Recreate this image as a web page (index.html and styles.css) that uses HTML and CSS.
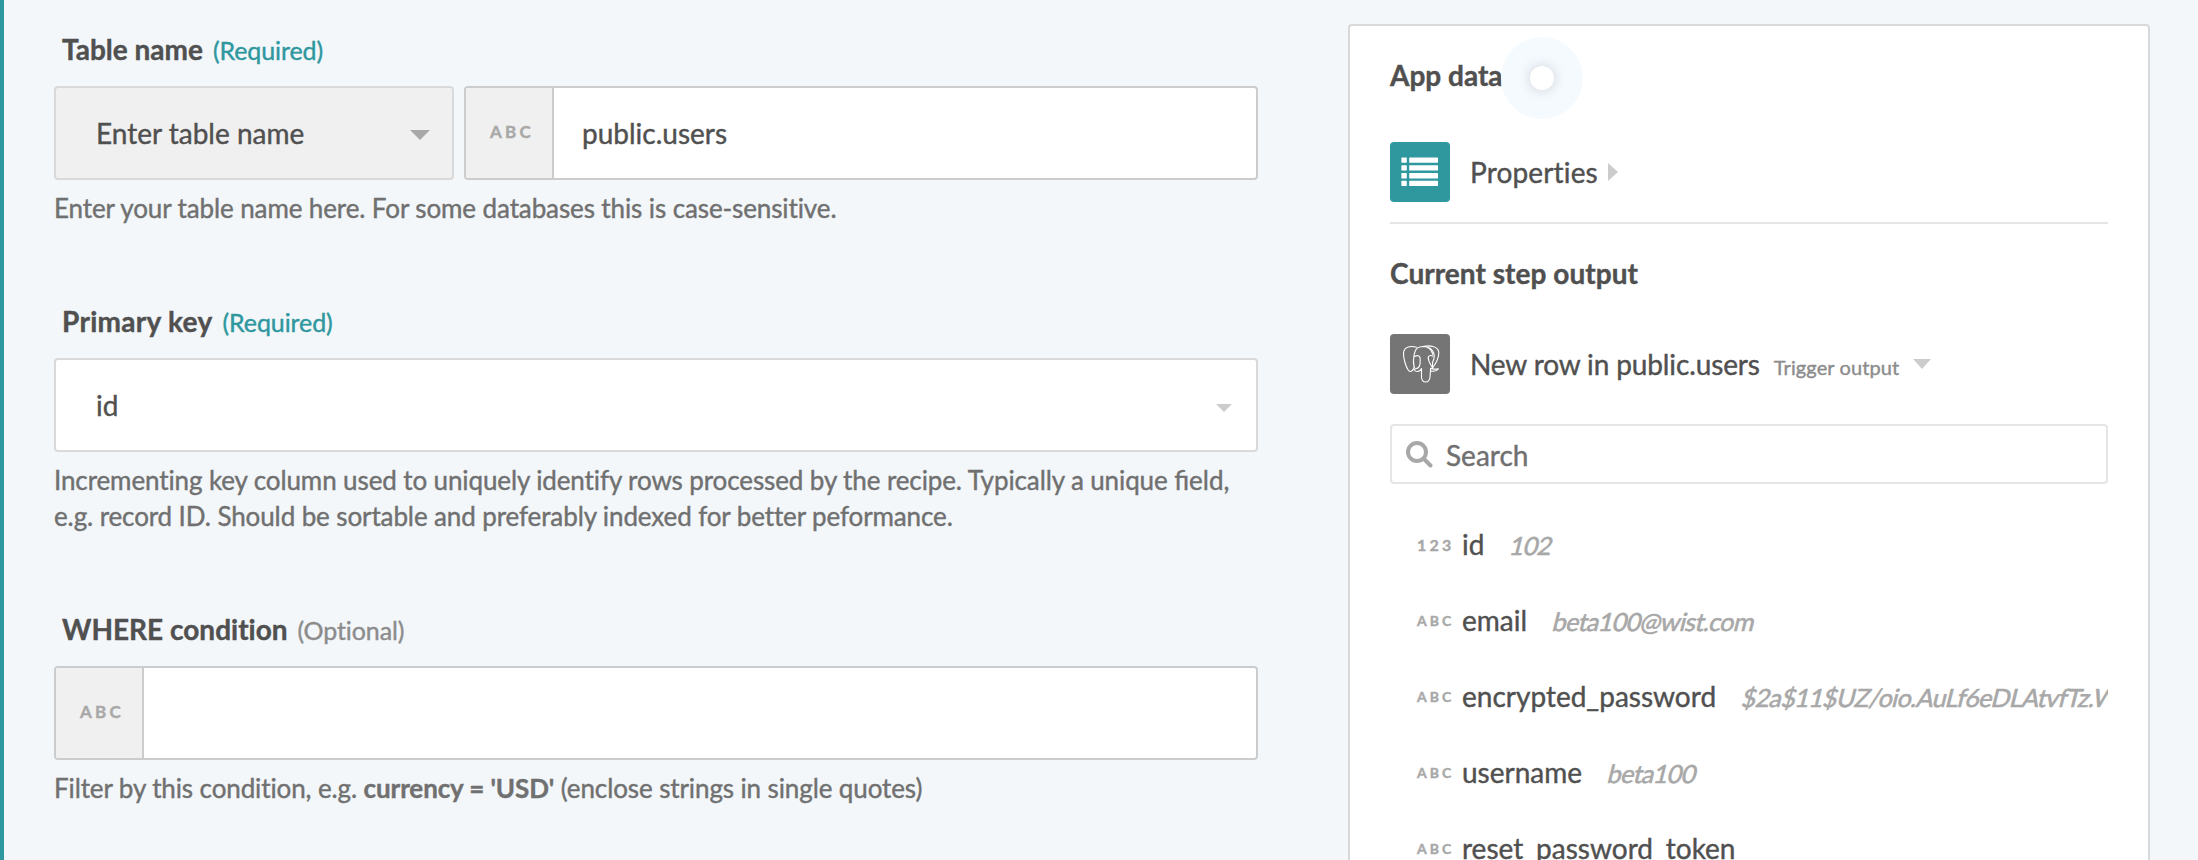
FILE: index.html
```html
<!DOCTYPE html>
<html lang="en">
<head>
<meta charset="utf-8">
<title>Recipe step setup</title>
<link rel="stylesheet" href="styles.css">
</head>
<body>
<div class="page">
  <main class="form">
    <section class="field">
      <h2 class="label">Table name <span class="hint required">(Required)</span></h2>
      <div class="controls">
        <div class="select select-muted"><span>Enter table name</span><svg class="caret" width="20" height="10" viewBox="0 0 20 10"><path d="M0 0h20L10 10z"/></svg></div>
        <div class="input"><span class="prefix">ABC</span><span class="value">public.users</span></div>
      </div>
      <p class="help">Enter your table name here. For some databases this is case-sensitive.</p>
    </section>
    <section class="field">
      <h2 class="label label-loose">Primary key <span class="hint required">(Required)</span></h2>
      <div class="controls">
        <div class="select select-wide"><span>id</span><svg class="caret caret-light" width="16" height="8" viewBox="0 0 16 8"><path d="M0 0h16L8 8z"/></svg></div>
      </div>
      <p class="help">Incrementing key column used to uniquely identify rows processed by the recipe. Typically a unique <span class="liga">field</span>,<br>e.g. record ID. Should be sortable and preferably indexed for better peformance.</p>
    </section>
    <section class="field">
      <h2 class="label">WHERE condition <span class="hint">(Optional)</span></h2>
      <div class="controls">
        <div class="input"><span class="prefix">ABC</span><span class="value"></span></div>
      </div>
      <p class="help">Filter by this condition, e.g. <b>currency = 'USD'</b> (enclose strings in single quotes)</p>
    </section>
  </main>
  <aside class="panel">
    <h2 class="panel-title">App data<span class="beacon"><span class="beacon-dot"></span></span></h2>
    <div class="source properties">
      <svg class="app-icon" width="60" height="60" viewBox="0 0 60 60">
        <rect width="60" height="60" rx="4" fill="#2f979e"/>
        <g fill="#fff">
          <rect x="11.4" y="15.4" width="5.4" height="5.4" rx=".6"/><rect x="19.2" y="15.4" width="28.8" height="5.4" rx=".6"/>
          <rect x="11.4" y="23.2" width="5.4" height="5.4" rx=".6"/><rect x="19.2" y="23.2" width="28.8" height="5.4" rx=".6"/>
          <rect x="11.4" y="31" width="5.4" height="5.4" rx=".6"/><rect x="19.2" y="31" width="28.8" height="5.4" rx=".6"/>
          <rect x="11.4" y="38.7" width="5.4" height="5.4" rx=".6"/><rect x="19.2" y="38.7" width="28.8" height="5.4" rx=".6"/>
        </g>
      </svg>
      <span class="source-loose">Properties</span>
      <svg class="arrow" width="10" height="18" viewBox="0 0 10 18"><path d="M0 0l10 9L0 18z" fill="#ccc"/></svg>
    </div>
    <h2 class="panel-title step-title">Current step output</h2>
    <div class="source trigger">
      <svg class="app-icon" width="60" height="60" viewBox="0 0 60 60">
        <rect width="60" height="60" rx="4" fill="#757575"/>
        <g fill="none" stroke="#fff" stroke-width="1.1" stroke-linecap="round" stroke-linejoin="round">
          <path d="M26.500 13.200C21 11.600 14.200 12.400 13.500 19c-.3 5.500 2.500 13.600 4.500 16.800 1.500 2.400 3.600 2.200 5-.2l1.500-2.400"/>
          <path d="M24.200 33.500C22.500 27 23.600 14.200 29.500 13c6.500-1.600 11.500 1 13.500 7.500"/>
          <path d="M24.500 22.500c3.500-2 6.200-.5 5.700 3.500-.4 4 .6 5.500-1.700 7.500-1.500 1.400-4 .8-4.300 2.500 2 2.300 6 1.800 7.300-1.500V43c0 7 8 6.500 8.500 0l.6-8.500"/>
          <path d="M33 12.600c5.500-1.300 15.500-1.200 15.800 6 .1 5-3.300 11.500-6.300 15.400"/>
          <path d="M38 13.200c5.500 1.700 8 8.800 4.800 14.300-.7 2 .2 4.500-.3 6.500-1.500-3.500-4.500-6.500-4.300-10.500.7-2.200 3-2.500 4.600-1.300"/>
          <path d="M40.500 34.300c2.300 1.200 5.300.9 7.900.4-1.500 2.100-4.900 2.800-7.800 2.400"/>
        </g>
      </svg>
      <span class="source-name">New row in public.users</span>
      <span class="source-note">Trigger output</span>
      <svg class="note-caret" width="18" height="10" viewBox="0 0 18 10"><path d="M0 0h18L9 10z" fill="#ccc"/></svg>
    </div>
    <div class="search">
      <svg width="27" height="27" viewBox="0 0 27 27" fill="none" stroke="#a8a8a8" stroke-width="4" stroke-linecap="round"><circle cx="11" cy="11" r="9"/><path d="M18 18l6.500 6.500"/></svg>
      <span>Search</span>
    </div>
    <ul class="pills">
      <li><span class="type type-num">123</span><span class="name">id</span><span class="sample">102</span></li>
      <li><span class="type">ABC</span><span class="name">email</span><span class="sample">beta100@wist.com</span></li>
      <li><span class="type">ABC</span><span class="name">encrypted_password</span><span class="sample">$2a$11$UZ/oio.AuLf6eDLAtvfTz.W</span></li>
      <li><span class="type">ABC</span><span class="name">username</span><span class="sample">beta100</span></li>
      <li><span class="type">ABC</span><span class="name">reset_password_token</span></li>
    </ul>
  </aside>
</div>
</body>
</html>
```
FILE: styles.css
```css
* { box-sizing: border-box; }
body {
  margin: 0;
  background: #f3f7fa;
  color: #505050;
  font-family: Lato, "Liberation Sans", sans-serif;
  font-size: 28px;
  font-weight: 400;
  font-variant-ligatures: none;
  -webkit-text-stroke: 0.4px currentColor;
}
.page {
  display: flex;
  align-items: flex-start;
  height: 860px;
  overflow: hidden;
  border-left: 4px solid #2f979e;
}
.form {
  display: flex;
  flex-direction: column;
  gap: 77px;
  width: 1204px;
  margin: 31px 90px 0 50px;
  flex: none;
}
.label {
  display: flex;
  align-items: baseline;
  gap: 10px;
  height: 36px;
  margin: 0 0 19px;
  padding-left: 8px;
  font-size: 28px;
  line-height: 36px;
  font-weight: 700;
  white-space: nowrap;
}
.label-loose { letter-spacing: 0.3px; }
.hint {
  color: #8c8c8c;
  font-size: 25px;
  font-weight: 400;
  letter-spacing: -0.1px;
}
.required { color: #2f979e; }
.controls { display: flex; gap: 10px; height: 94px; }
.select {
  display: flex;
  align-items: center;
  justify-content: space-between;
  width: 400px;
  padding: 0 22px 0 40px;
  border: 2px solid #d9d9d9;
  border-radius: 4px;
  background: #fff;
}
.select-muted { background: #f0f0f0; }
.select-wide { width: 100%; padding-right: 24px; }
.caret { fill: #a8a8a8; margin-top: 3px; }
.caret-light { fill: #ccc; margin-top: 5px; }
.input {
  display: flex;
  flex: 1;
  border: 2px solid #ccc;
  border-radius: 4px;
  background: #fff;
  overflow: hidden;
}
.prefix {
  width: 88px;
  padding-left: 24px;
  border-right: 2px solid #ccc;
  background: #f0f0f0;
  color: #a8a8a8;
  font-size: 17px;
  font-weight: 700;
  letter-spacing: 3.2px;
  line-height: 87px;
}
.value { padding-left: 28px; line-height: 90px; }
.help {
  margin: 10px 0 0;
  color: #707070;
  font-size: 26px;
  letter-spacing: -0.11px;
  line-height: 36px;
  white-space: nowrap;
}
.liga {
  letter-spacing: 0;
  font-variant-ligatures: common-ligatures;
}
.panel {
  width: 802px;
  height: 900px;
  margin-top: 24px;
  padding: 31px 40px 0;
  border: 2px solid #d9d9d9;
  border-radius: 4px;
  background: #fff;
  flex: none;
}
.panel-title {
  display: flex;
  align-items: center;
  height: 36px;
  margin: 0;
  font-size: 28px;
  line-height: 36px;
  font-weight: 700;
}
.beacon {
  display: flex;
  align-items: center;
  justify-content: center;
  width: 82px;
  height: 82px;
  margin: 6px 0 0 -2px;
  border-radius: 50%;
  background: #f4fafe;
  flex: none;
}
.beacon-dot {
  width: 24px;
  height: 24px;
  border-radius: 50%;
  background: #fff;
  box-shadow: 0 0 12px 1px #d3d8df;
}
.source { display: flex; align-items: center; line-height: 60px; }
.source-loose { letter-spacing: 0.15px; }
.app-icon { flex: none; margin-right: 20px; }
.properties {
  height: 82px;
  margin-top: 49px;
  padding-bottom: 20px;
  border-bottom: 2px solid #e5e5e5;
}
.arrow { margin-left: 10px; }
.step-title { margin-top: 31px; letter-spacing: 0.05px; }
.trigger { height: 60px; margin-top: 43px; align-items: baseline; }
.trigger .app-icon { align-self: center; }
.source-name { letter-spacing: -0.12px; }
.source-note { margin-left: 14px; color: #8c8c8c; font-size: 20px; letter-spacing: 0.1px; }
.note-caret { align-self: center; margin-left: 14px; }
.search {
  display: flex;
  align-items: center;
  gap: 13px;
  height: 60px;
  margin-top: 30px;
  padding-left: 14px;
  border: 2px solid #e5e5e5;
  border-radius: 4px;
  color: #707070;
}
.search span { line-height: 56px; padding-top: 2px; }
.pills {
  margin: 22px 0 0;
  padding: 0;
  list-style: none;
  overflow: hidden;
}
.pills li {
  display: flex;
  height: 76px;
  line-height: 76px;
  white-space: nowrap;
}
.type {
  width: 45px;
  margin-left: 27px;
  color: #a8a8a8;
  font-size: 14px;
  font-weight: 700;
  letter-spacing: 3px;
  line-height: 78px;
  flex: none;
}
.type-num { font-size: 16px; letter-spacing: 3.2px; }
.sample {
  margin-left: 27px;
  color: #a8a8a8;
  font-size: 25px;
  letter-spacing: -0.6px;
  line-height: 78px;
  transform: skewX(-14deg);
  -webkit-text-stroke-width: 0.6px;
}
```
